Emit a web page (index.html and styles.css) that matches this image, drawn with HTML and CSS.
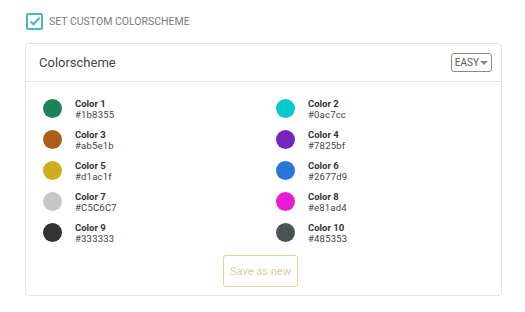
FILE: index.html
```html
<!DOCTYPE html>
<html lang="en">
  <head>
    <meta charset="UTF-8" />
    <title>Colorscheme</title>
    <link rel="stylesheet" href="styles.css">
  </head>
  <body>
    <!-- Custom colorscheme toggle -->
    <label class="custom-toggle">
      <span class="check-box">
        <svg width="12" height="10" viewBox="0 0 12 10">
          <path d="M1.5 5.2 L4.6 8.2 L10.5 1.8" fill="none" stroke="#4db6b8" stroke-width="2" />
        </svg>
      </span>
      <span class="toggle-text">Set custom colorscheme</span>
    </label>

    <div class="card">
      <div class="card-header">
        <span class="card-title">Colorscheme</span>
        <span class="level-select">EASY<span class="caret"></span></span>
      </div>

      <div class="card-body">
        <div class="color-grid">
          <div class="color-item"><span class="swatch" style="background: #1b8355"></span><div><div class="color-name">Color 1</div><div class="color-hex">#1b8355</div></div></div>
          <div class="color-item"><span class="swatch" style="background: #0ac7cc"></span><div><div class="color-name">Color 2</div><div class="color-hex">#0ac7cc</div></div></div>
          <div class="color-item"><span class="swatch" style="background: #ab5e1b"></span><div><div class="color-name">Color 3</div><div class="color-hex">#ab5e1b</div></div></div>
          <div class="color-item"><span class="swatch" style="background: #7825bf"></span><div><div class="color-name">Color 4</div><div class="color-hex">#7825bf</div></div></div>
          <div class="color-item"><span class="swatch" style="background: #d1ac1f"></span><div><div class="color-name">Color 5</div><div class="color-hex">#d1ac1f</div></div></div>
          <div class="color-item"><span class="swatch" style="background: #2677d9"></span><div><div class="color-name">Color 6</div><div class="color-hex">#2677d9</div></div></div>
          <div class="color-item"><span class="swatch" style="background: #C5C6C7"></span><div><div class="color-name">Color 7</div><div class="color-hex">#C5C6C7</div></div></div>
          <div class="color-item"><span class="swatch" style="background: #e81ad4"></span><div><div class="color-name">Color 8</div><div class="color-hex">#e81ad4</div></div></div>
          <div class="color-item"><span class="swatch" style="background: #333333"></span><div><div class="color-name">Color 9</div><div class="color-hex">#333333</div></div></div>
          <div class="color-item"><span class="swatch" style="background: #485353"></span><div><div class="color-name">Color 10</div><div class="color-hex">#485353</div></div></div>
        </div>

        <div class="actions">
          <button class="save-button">Save as new</button>
        </div>
      </div>
    </div>
  </body>
</html>
```

FILE: styles.css
```css
body {
  font-family: Roboto, "Liberation Sans", sans-serif;
  background: #ffffff;
  margin: 0;
  padding: 12px 23px 0 25px;
  color: #333;
}

/* Top checkbox */
.custom-toggle {
  display: flex;
  align-items: center;
  height: 18px;
  margin-left: 1px;
}

.check-box {
  width: 13px;
  height: 13px;
  border: 2px solid #4db6b8;
  border-radius: 2px;
  display: flex;
  align-items: center;
  justify-content: center;
  margin-right: 6px;
}

.toggle-text {
  text-transform: uppercase;
  font-size: 10.5px;
  color: #7a7a7a;
}

/* Card */
.card {
  margin-top: 13px;
  border: 1px solid #e3e3e3;
  border-radius: 4px;
}

.card-header {
  height: 37px;
  display: flex;
  align-items: center;
  justify-content: space-between;
  padding: 0 9px 0 13px;
  border-bottom: 1px solid #e3e3e3;
}

.card-title {
  font-size: 13px;
  color: #444;
}

.level-select {
  display: flex;
  align-items: center;
  height: 17px;
  padding: 0 3px 0 3px;
  border: 1px solid #8a8a8a;
  border-radius: 3px;
  font-size: 10px;
  color: #555;
}

.caret {
  width: 0;
  height: 0;
  margin-left: 1px;
  border-left: 4px solid transparent;
  border-right: 4px solid transparent;
  border-top: 4px solid #888;
}

.card-body {
  padding: 17px 10px 8px 17px;
}

.color-grid {
  display: grid;
  grid-template-columns: 233px 1fr;
  row-gap: 12px;
}

.color-item {
  display: flex;
  align-items: center;
  height: 19px;
}

.swatch {
  width: 19px;
  height: 19px;
  border-radius: 50%;
  margin-right: 13px;
  flex-shrink: 0;
}

.color-name {
  font-size: 9.5px;
  font-weight: bold;
  color: #333;
  line-height: 11px;
}

.color-hex {
  font-size: 9.5px;
  color: #444;
  line-height: 11px;
  letter-spacing: 0.2px;
}

.actions {
  display: flex;
  justify-content: center;
  margin-top: 13px;
  padding-right: 13px;
}

.save-button {
  width: 75px;
  height: 32px;
  background: #ffffff;
  border: 1px solid #e5d29e;
  border-radius: 3px;
  color: #e2cd94;
  font-family: Roboto, "Liberation Sans", sans-serif;
  font-size: 11px;
  padding: 0;
}
```
